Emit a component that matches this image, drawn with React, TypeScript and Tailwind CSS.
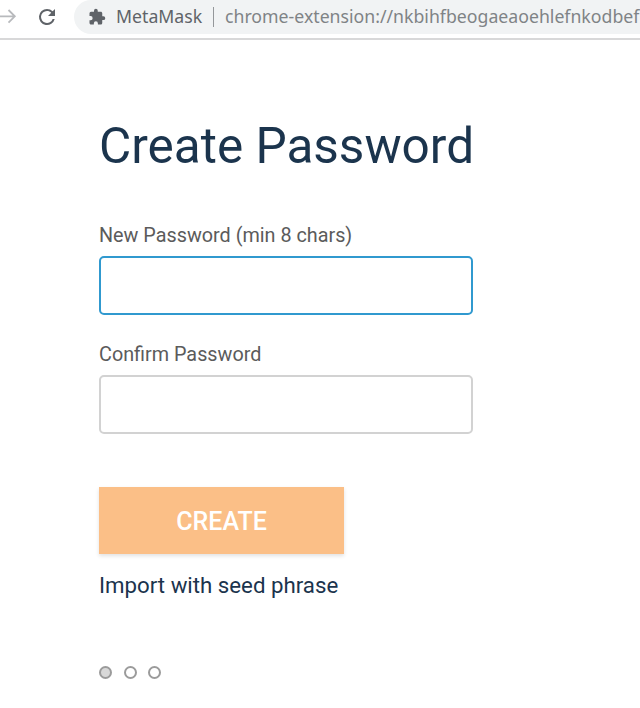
const fields = [
  { id: "new-password", label: "New Password (min 8 chars)", border: "border-[#3099cf]" },
  { id: "confirm-password", label: "Confirm Password", border: "border-[#d2d2d2]" },
];

const BrowserBar = () => (
  <header className="flex h-10 items-start overflow-hidden border-b-2 border-[#d8d8d9] bg-white">
    <svg className="mt-[7px] h-5 w-[18px] shrink-0" viewBox="0 0 18 20" fill="none" stroke="#b8babd" strokeWidth="1.8">
      <path d="M0 9.3H14.5M8.5 3L14.8 9.3L8.5 15.6" />
    </svg>
    <svg className="mt-[5px] ml-[17px] h-6 w-6 shrink-0" viewBox="0 0 24 24" fill="#5f6368">
      <path d="M17.65 6.35A7.96 7.96 0 0 0 12 4a8 8 0 1 0 7.73 10h-2.08A6 6 0 1 1 12 6c1.66 0 3.14.69 4.22 1.78L13 11h7V4z" />
    </svg>
    <div className="ml-[15px] flex h-[34px] flex-1 items-center rounded-l-full bg-[#f1f3f4] pb-px pl-[14px] font-['Noto_Sans',sans-serif] text-[17.7px] whitespace-nowrap">
      <svg className="h-[18px] w-[18px] shrink-0" viewBox="0 0 24 24" fill="#5f6368">
        <path d="M20.5 11H19V7c0-1.1-.9-2-2-2h-4V3.5a2.5 2.5 0 0 0-5 0V5H4a2 2 0 0 0-2 2v3.8h1.5a2.7 2.7 0 0 1 0 5.4H2V20c0 1.1.9 2 2 2h3.8v-1.5a2.7 2.7 0 0 1 5.4 0V22H17a2 2 0 0 0 2-2v-4h1.5a2.5 2.5 0 0 0 0-5z" />
      </svg>
      <span className="ml-[10px] w-[88px] text-[#5f6368]">MetaMask</span>
      <span className="mr-[11px] ml-[9px] h-5 w-px bg-[#94979a]" />
      <span className="text-[#7f8386]">chrome-extension://nkbihfbeogaeaoehlefnkodbef</span>
    </div>
  </header>
);

const App = () => (
  <div className="h-[708px] overflow-hidden bg-white font-[Roboto,sans-serif]">
    <BrowserBar />
    <main className="ml-[99px] w-[374px] pt-[76px]">
      <h1 className="text-[49.5px] leading-[60px] whitespace-nowrap text-[#1b344d]">Create Password</h1>
      <form className="pt-[45px]" onSubmit={(e) => e.preventDefault()}>
        {fields.map((field) => (
          <div key={field.id} className="mb-[25px]">
            <label htmlFor={field.id} className="block h-[35px] text-[19.8px] leading-[30px] text-[#5b5b5b]">
              {field.label}
            </label>
            <input
              id={field.id}
              type="password"
              className={`block h-[59px] w-full rounded-[5px] border-2 bg-white px-4 outline-none ${field.border}`}
            />
          </div>
        ))}
        <button
          type="submit"
          className="mt-[53px] block h-[67px] w-[245px] bg-[#fbbf87] pt-0.5 text-[25px] font-medium text-white shadow-[0_2px_4px_rgba(0,0,0,0.12)]"
        >
          CREATE
        </button>
      </form>
      <a href="#" className="mt-4 block text-[22.25px] leading-[30px] text-[#1b344d]">
        Import with seed phrase
      </a>
      <div className="mt-[66px] flex gap-[11.6px]">
        <span className="size-[13px] rounded-full border-2 border-[#9b9b9b] bg-[#d8d8d8]" />
        <span className="size-[13px] rounded-full border-2 border-[#9b9b9b]" />
        <span className="size-[13px] rounded-full border-2 border-[#9b9b9b]" />
      </div>
    </main>
  </div>
);

export default App;
